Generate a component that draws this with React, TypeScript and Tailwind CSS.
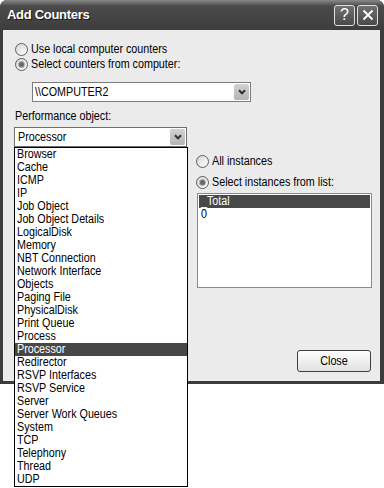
import type { ReactNode } from "react"

const objects = [
  "Browser",
  "Cache",
  "ICMP",
  "IP",
  "Job Object",
  "Job Object Details",
  "LogicalDisk",
  "Memory",
  "NBT Connection",
  "Network Interface",
  "Objects",
  "Paging File",
  "PhysicalDisk",
  "Print Queue",
  "Process",
  "Processor",
  "Redirector",
  "RSVP Interfaces",
  "RSVP Service",
  "Server",
  "Server Work Queues",
  "System",
  "TCP",
  "Telephony",
  "Thread",
  "UDP",
]

// the dialog font is a narrow one, squeeze Liberation Sans to match
const T = ({ children, center }: { children: ReactNode; center?: boolean }) => (
  <span
    className={`inline-block whitespace-nowrap scale-x-[0.86] ${center ? "origin-center" : "origin-left"}`}
  >
    {children}
  </span>
)

const Radio = ({ checked }: { checked?: boolean }) => (
  <span className="flex h-[13px] w-[13px] shrink-0 items-center justify-center rounded-full border border-[#5c5c5c] bg-linear-to-br from-[#d6d6d6] to-white">
    {checked && <span className="h-[5px] w-[5px] rounded-full bg-[#6a6a6a] ring-1 ring-[#b0b0b0]" />}
  </span>
)

const ComboButton = () => (
  <span className="flex h-[16px] w-[15px] items-center justify-center rounded-[2px] bg-linear-to-b from-[#d2d2d2] to-[#b4b4b4]">
    <svg width="8" height="6" viewBox="0 0 8 6">
      <path d="M1 1.2 L4 4.4 L7 1.2" stroke="#2e2e2e" strokeWidth="2" fill="none" />
    </svg>
  </span>
)

const TitleButton = ({ children }: { children: ReactNode }) => (
  <span className="flex h-[21px] w-[21px] items-center justify-center rounded-[3px] border border-[#e0e0e0] bg-linear-to-b from-[#707070] to-[#4a4a4a] text-white">
    {children}
  </span>
)

export default function App() {
  return (
    <div className="relative h-[488px] w-[384px] overflow-hidden bg-white font-['Liberation_Sans',sans-serif] text-[12.5px] text-black">
      <div className="flex h-[384px] w-[384px] flex-col rounded-t-[7px] bg-[#3c3c3c]">
        <div className="flex h-[30px] items-center justify-between rounded-t-[7px] bg-linear-to-b from-[#8a8a8a] via-[#4a4a4a] via-20% to-[#3d3d3d] pl-[7px] pr-[6px]">
          <span className="text-[13px] font-bold tracking-[-0.3px] text-white [text-shadow:1px_1px_0_#1a1a1a]">
            Add Counters
          </span>
          <div className="flex gap-[2px]">
            <TitleButton>
              <span className="text-[16px] leading-none">?</span>
            </TitleButton>
            <TitleButton>
              <svg width="12" height="12" viewBox="0 0 12 12">
                <path d="M1.5 1.5 L10.5 10.5 M10.5 1.5 L1.5 10.5" stroke="white" strokeWidth="1.8" />
              </svg>
            </TitleButton>
          </div>
        </div>

        <div className="mb-[3px] ml-[3px] mr-[4px] flex flex-1 flex-col bg-[#ebebeb]">
          <div className="flex flex-col pl-[12px] pt-[12px]">
            <div className="flex h-[14px] items-center gap-[3px]">
              <Radio />
              <T>Use local computer counters</T>
            </div>
            <div className="mt-[1px] flex h-[14px] items-center gap-[3px]">
              <Radio checked />
              <T>Select counters from computer:</T>
            </div>
          </div>

          <div className="ml-[29px] mt-[11px] flex h-[20px] w-[219px] items-center justify-between border border-[#7c7c7c] bg-white pl-[2px] pr-[1px]">
            <T>{"\\\\COMPUTER2"}</T>
            <ComboButton />
          </div>

          <div className="ml-[12px] mt-[7px] h-[14px] leading-[14px]">
            <T>Performance object:</T>
          </div>

          <div className="ml-[11px] mt-[4px] flex h-[20px] w-[173px] items-center justify-between border border-[#6e6e6e] bg-white pl-[3px] pr-[1px]">
            <T>Processor</T>
            <ComboButton />
          </div>

          <div className="ml-[193px] flex flex-col">
            <div className="mt-[7px] flex h-[14px] items-center gap-[3px]">
              <Radio />
              <T>All instances</T>
            </div>
            <div className="mt-[7px] flex h-[14px] items-center gap-[3px]">
              <Radio checked />
              <T>Select instances from list:</T>
            </div>
            <div className="ml-[1px] mt-[4px] h-[95px] w-[175px] border border-[#8a8a8a] bg-white p-[1px]">
              <div className="h-[13px] bg-[#484848] pl-[2px] leading-[13px] text-white">
                <T>_Total</T>
              </div>
              <div className="h-[13px] pl-[2px] leading-[13px]">
                <T>0</T>
              </div>
            </div>
          </div>

          <button className="mb-[9px] mr-[9px] mt-auto flex h-[22px] w-[74px] items-center justify-center self-end rounded-[3px] border border-[#3f3f3f] bg-linear-to-b from-white to-[#e0e0e0]">
            <T center>Close</T>
          </button>
        </div>
      </div>

      <ul className="absolute left-[14px] top-[147px] h-[340px] w-[174px] border border-black bg-white">
        {objects.map((name) => (
          <li
            key={name}
            className={`h-[13px] pl-[2px] leading-[13px] ${name === "Processor" ? "bg-[#474747] text-white" : ""}`}
          >
            <T>{name}</T>
          </li>
        ))}
      </ul>
    </div>
  )
}
